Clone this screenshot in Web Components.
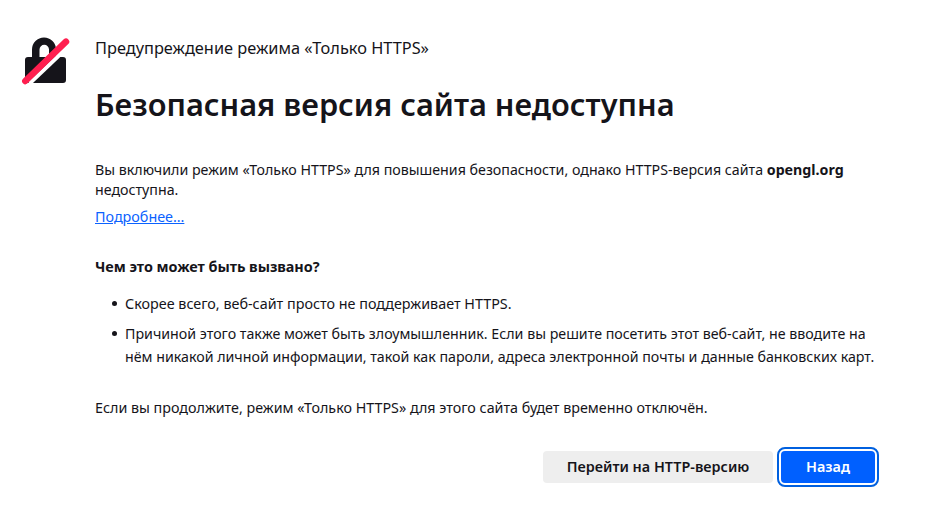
<!DOCTYPE html>
<html lang="ru"><head><meta charset="utf-8">
<style>html,body{margin:0;background:#fff}body{font-family:"Noto Sans","Open Sans",sans-serif;color:#15141a}</style>
</head><body>
<https-page></https-page>
<script>
class LockIcon extends HTMLElement{constructor(){super();this.attachShadow({mode:'open'}).innerHTML=`<style>:host{display:block;width:48px;height:54px;flex:none}svg{display:block;overflow:visible}</style>
<svg width="48" height="54" viewBox="0 0 48 54">
<path fill="#15141a" d="M9 25V17.500a12 12 0 0 1 24 0V25h7a3 3 0 0 1 3 3V48a3 3 0 0 1-3 3H5a3 3 0 0 1-3-3V28a3 3 0 0 1 3-3zM16.500 25h9.500v-7.500a4.750 4.750 0 0 0-9.500 0z" fill-rule="evenodd"/>
<path d="M6.500 51.500 47 13" stroke="#fff" stroke-width="4"/>
<path d="M2.300 49 43 9.700" stroke="#ff1f4f" stroke-width="6.500" stroke-linecap="round"/>
</svg>`}}
customElements.define('lock-icon',LockIcon);
class UiButton extends HTMLElement{constructor(){super();this.attachShadow({mode:'open'}).innerHTML=`<style>
:host{display:block;font:600 14.400px/1 "Noto Sans",sans-serif}
.b{display:flex;align-items:center;justify-content:center;box-sizing:border-box;height:32px;width:230px;border-radius:4px;background:#eeeeee;color:#15141a}
:host([primary]) .b{background:#0060ff;color:#fff;outline:2px solid #0060df;outline-offset:2px;width:94px}
</style><div class="b"><slot></slot></div>`}}
customElements.define('ui-button',UiButton);
class ReasonList extends HTMLElement{constructor(){super();this.attachShadow({mode:'open'}).innerHTML=`<style>
:host{display:flex;flex-direction:column;gap:7px}
</style><slot></slot>`}}
customElements.define('reason-list',ReasonList);
class ReasonItem extends HTMLElement{constructor(){super();this.attachShadow({mode:'open'}).innerHTML=`<style>
:host{display:flex;padding-left:17px}
.d{width:13px;flex:none}
.d::before{content:"";display:block;width:5px;height:5px;border-radius:50%;background:#15141a;margin-top:9px}
.t{flex:1}
:host([tight]) .t{font-size:14.220px}
</style><span class="d"></span><div class="t"><slot></slot></div>`}}
customElements.define('reason-item',ReasonItem);
class HttpsPage extends HTMLElement{constructor(){super();this.attachShadow({mode:'open'}).innerHTML=`<style>
:host{display:flex;box-sizing:border-box;width:943px;height:521px;padding:32px 0 0 23px;font-size:14.350px;line-height:23px}
.main{margin-left:24px;width:781px}
.eyebrow{font-size:16.350px;line-height:24px;margin-top:4px}
h1{font-size:30.750px;font-weight:600;line-height:40px;margin:24px 0 0;white-space:nowrap}
p{margin:0}
.intro{margin-top:36px;line-height:20px;font-size:14.220px}
a{display:inline-block;color:#0b62ff;text-decoration:underline;margin-top:5px}
h2{font:700 14.400px/23px "Noto Sans",sans-serif;margin:27px 0 0;letter-spacing:-.03px}
reason-list{margin-top:14px}
.cont{margin-top:28px;font-size:14.300px}
.btns{display:flex;justify-content:flex-end;gap:8px;margin-top:32px;width:780px}
</style>
<lock-icon></lock-icon>
<div class="main">
<div class="eyebrow">Предупреждение режима «Только HTTPS»</div>
<h1>Безопасная версия сайта недоступна</h1>
<p class="intro">Вы включили режим «Только HTTPS» для повышения безопасности, однако HTTPS-версия сайта <b>opengl.org</b> недоступна.</p>
<a href="#">Подробнее…</a>
<h2>Чем это может быть вызвано?</h2>
<reason-list>
<reason-item>Скорее всего, веб-сайт просто не поддерживает HTTPS.</reason-item>
<reason-item tight>Причиной этого также может быть злоумышленник. Если вы решите посетить этот веб-сайт, не вводите на нём никакой личной информации, такой как пароли, адреса электронной почты и данные банковских карт.</reason-item>
</reason-list>
<p class="cont">Если вы продолжите, режим «Только HTTPS» для этого сайта будет временно отключён.</p>
<div class="btns"><ui-button>Перейти на HTTP-версию</ui-button><ui-button primary>Назад</ui-button></div>
</div>`}}
customElements.define('https-page',HttpsPage);
</script>
</body></html>
